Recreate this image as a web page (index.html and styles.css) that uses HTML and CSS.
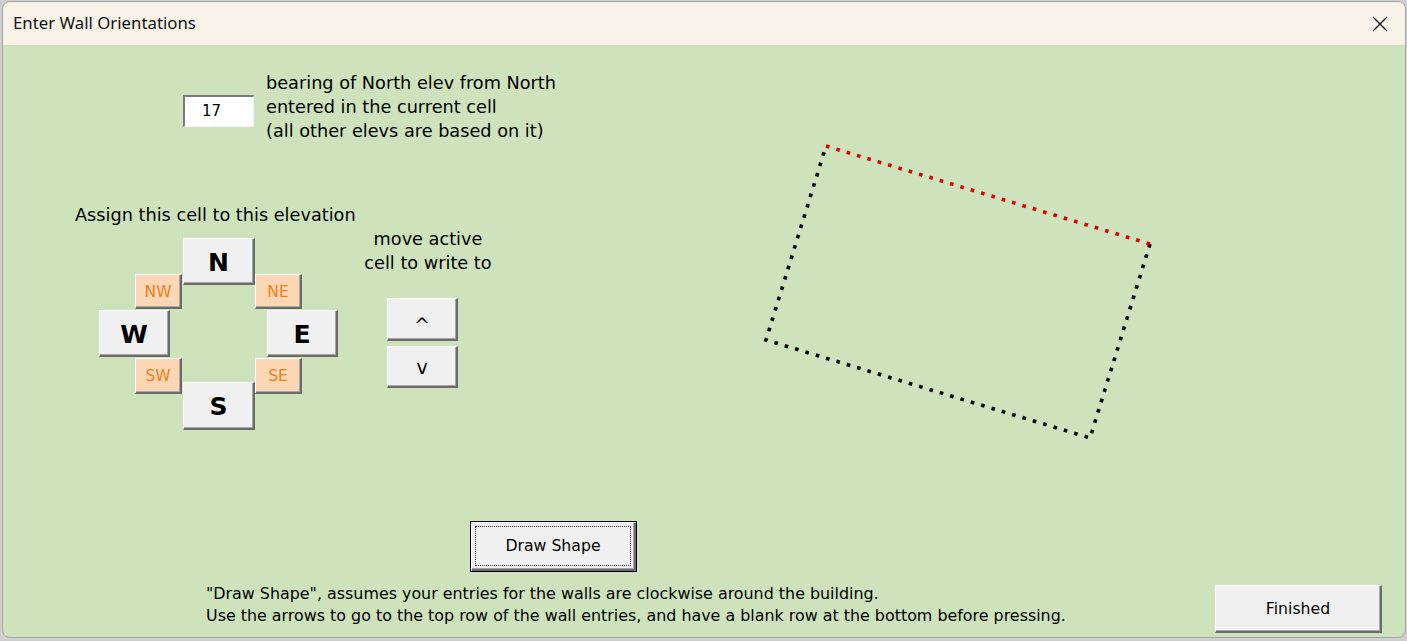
FILE: index.html
```html
<!DOCTYPE html>
<html>
<head>
<meta charset="utf-8">
<title>Enter Wall Orientations</title>
<link rel="stylesheet" href="styles.css">
</head>
<body>
<div class="window">
  <div class="titlebar">
    <span class="title">Enter Wall Orientations</span>
    <svg class="close" width="16" height="16" viewBox="0 0 16 16"><path d="M1 1 L15 15 M15 1 L1 15" stroke="#111" stroke-width="1.3" fill="none"/></svg>
  </div>
  <div class="content">
    <div class="main">
      <div class="left">
        <div class="bearing">
          <div class="textbox">17</div>
          <div class="label bearing-label">bearing of North elev from North<br>entered in the current cell<br>(all other elevs are based on it)</div>
        </div>
        <div class="label assign">Assign this cell to this elevation</div>
        <div class="controls">
          <div class="compass">
            <button class="btn big n">N</button>
            <button class="btn small nw">NW</button>
            <button class="btn small ne">NE</button>
            <button class="btn big w">W</button>
            <button class="btn big e">E</button>
            <button class="btn small sw">SW</button>
            <button class="btn small se">SE</button>
            <button class="btn big s">S</button>
          </div>
          <div class="move">
            <div class="label move-label">move active<br>cell to write to</div>
            <button class="btn arrow up">^</button>
            <button class="btn arrow down">v</button>
          </div>
        </div>
      </div>
      <svg class="shape" width="420" height="320" viewBox="0 0 420 320">
        <polyline points="399,113 339,307 15,209 75,15" fill="none" stroke="#000" stroke-width="3.6" stroke-dasharray="3.6 7.2"/>
        <line x1="75" y1="15" x2="399" y2="113" stroke="#e00000" stroke-width="3.6" stroke-dasharray="3.6 7.2"/>
      </svg>
    </div>
    <button class="btn draw"><span class="focus">Draw Shape</span></button>
    <div class="footer">
      <div class="notes">"Draw Shape", assumes your entries for the walls are clockwise around the building.<br>Use the arrows to go to the top row of the wall entries, and have a blank row at the bottom before pressing.</div>
      <button class="btn finished">Finished</button>
    </div>
  </div>
</div>
</body>
</html>
```
FILE: styles.css
```css
html, body {
  margin: 0;
  padding: 0;
}
body {
  background: #cfcfcf;
  width: 1407px;
  height: 641px;
  overflow: hidden;
}
.window {
  margin: 1px 1px 0 2px;
  height: 637px;
  border: 1px solid #a5a5a5;
  border-radius: 8px;
  overflow: hidden;
  background: #cee3bc;
  box-sizing: border-box;
  display: flex;
  flex-direction: column;
}
.titlebar {
  height: 43px;
  flex: none;
  background: #f8f2e8;
  display: flex;
  align-items: center;
  padding-left: 10px;
  padding-right: 17px;
}
.title {
  font-family: "Noto Sans", sans-serif;
  font-size: 16.8px;
  color: #111;
  flex: 1;
  padding-bottom: 2px;
}
.close {
  display: block;
}
.content {
  flex: 1;
  display: flex;
  flex-direction: column;
  font-family: "DejaVu Sans", Verdana, sans-serif;
  color: #000;
}
.main {
  display: flex;
  height: 476px;
}
.left {
  width: 748px;
  flex: none;
  padding-top: 26px;
  box-sizing: border-box;
}
.label {
  font-size: 17.7px;
  line-height: 24px;
}
.bearing {
  display: flex;
  align-items: flex-start;
  padding-left: 180px;
}
.textbox {
  margin-top: 24px;
  width: 71px;
  height: 32px;
  box-sizing: border-box;
  background: #fff;
  border-style: solid;
  border-width: 2px 1px 1px 2px;
  border-color: #7a7a7a #f4f4f4 #f4f4f4 #7a7a7a;
  font-size: 15px;
  line-height: 28px;
  padding-left: 17px;
}
.bearing-label {
  margin-left: 12px;
}
.assign {
  margin-top: 60px;
  margin-left: 72px;
}
.controls {
  display: flex;
  align-items: flex-start;
}
.btn {
  box-sizing: border-box;
  margin: 0;
  padding: 0;
  background: #f0f0f0;
  border-style: solid;
  border-width: 1px 2px 2px 1px;
  border-color: #ffffff #6b6b6b #6b6b6b #ffffff;
  box-shadow: inset -1px -1px 0 #a8a8a8;
  font-family: "DejaVu Sans", Verdana, sans-serif;
  color: #000;
  cursor: default;
}
.compass {
  margin-left: 96px;
  margin-top: 11px;
  display: grid;
  grid-template-columns: 36px 36px 12px 72px 12px 36px 36px;
  grid-template-rows: 36px 12px 24px 48px 24px 12px 36px;
}
.big {
  font-weight: bold;
  font-size: 25px;
  padding-top: 2px;
}
.small {
  background: #fdd7b5;
  color: #ee8020;
  font-size: 15.5px;
  padding-top: 1px;
}
.n { grid-column: 4; grid-row: 1 / 3; margin-bottom: 1px; }
.s { grid-column: 4; grid-row: 6 / 8; }
.w { grid-column: 1 / 3; grid-row: 4; margin-right: 1px; margin-bottom: 1px; }
.e { grid-column: 6 / 8; grid-row: 4; margin-right: 1px; margin-bottom: 1px; }
.nw { grid-column: 2 / 4; grid-row: 2 / 4; margin-right: 1px; margin-bottom: 1px; }
.ne { grid-column: 5 / 7; grid-row: 2 / 4; margin-right: 1px; margin-bottom: 1px; }
.sw { grid-column: 2 / 4; grid-row: 5 / 7; margin-right: 1px; }
.se { grid-column: 5 / 7; grid-row: 5 / 7; margin-right: 1px; }
.move {
  margin-left: 24px;
  width: 130px;
  display: flex;
  flex-direction: column;
  align-items: flex-start;
}
.move-label {
  width: 130px;
  text-align: center;
}
.arrow {
  width: 71px;
  margin-left: 24px;
  font-size: 19px;
}
.up {
  margin-top: 23px;
  height: 43px;
  padding-top: 12px;
}
.down {
  margin-top: 5px;
  height: 42px;
}
.shape {
  margin-top: 86px;
  margin-left: 0;
  display: block;
}
.draw {
  align-self: flex-start;
  margin-left: 467px;
  width: 167px;
  height: 51px;
  border: 1px solid #000;
  box-shadow: inset 1px 1px 0 #fff, inset -2px -2px 0 #6b6b6b, inset -3px -3px 0 #a8a8a8;
  padding: 4px 5px 5px 4px;
  font-size: 15.7px;
}
.focus {
  display: block;
  height: 100%;
  border: 1px dotted #333;
  box-sizing: border-box;
  line-height: 38px;
}
.footer {
  display: flex;
  align-items: flex-start;
  margin-top: 11px;
}
.notes {
  margin-left: 203px;
  font-size: 15.9px;
  line-height: 22px;
}
.finished {
  margin-left: auto;
  margin-right: 23px;
  margin-top: 2px;
  width: 167px;
  height: 48px;
  font-size: 15.7px;
}
```
